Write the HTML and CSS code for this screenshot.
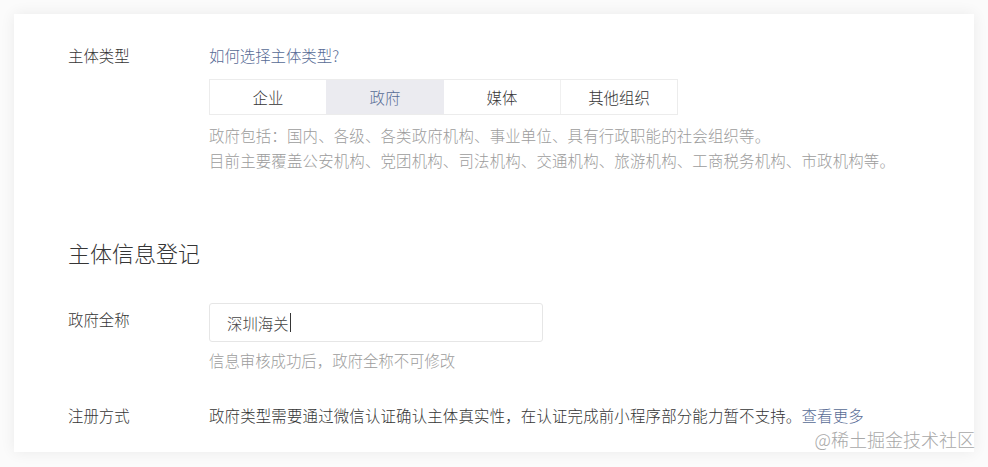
FILE: index.html
```html
<!DOCTYPE html>
<html lang="zh-CN">
<head>
<meta charset="utf-8">
<link rel="stylesheet" href="styles.css">
</head>
<body>
<div class="card">
  <div class="row row-type">
    <div class="label">主体类型</div>
    <div class="field">
      <a class="link">如何选择主体类型?</a>
      <div class="segmented">
        <div class="seg">企业</div>
        <div class="seg active">政府</div>
        <div class="seg">媒体</div>
        <div class="seg">其他组织</div>
      </div>
      <div class="help">政府包括：国内、各级、各类政府机构、事业单位、具有行政职能的社会组织等。<br>目前主要覆盖公安机构、党团机构、司法机构、交通机构、旅游机构、工商税务机构、市政机构等。</div>
    </div>
  </div>
  <h2 class="section-title">主体信息登记</h2>
  <div class="row row-name">
    <div class="label label-input">政府全称</div>
    <div class="field">
      <div class="input"><span class="value">深圳海关</span><span class="caret"></span></div>
      <div class="hint">信息审核成功后，政府全称不可修改</div>
    </div>
  </div>
  <div class="row row-reg">
    <div class="label">注册方式</div>
    <div class="field text">政府类型需要通过微信认证确认主体真实性，在认证完成前小程序部分能力暂不支持。<a class="link">查看更多</a></div>
  </div>
  <div class="watermark">@稀土掘金技术社区</div>
</div>
</body>
</html>
```
FILE: styles.css
```css
html, body {
  margin: 0;
  padding: 0;
}
body {
  background: #fbfbfb;
  font-family: "Noto Sans CJK SC", "Noto Sans", sans-serif;
  font-size: 15.4px;
  font-weight: 300;
  color: #353535;
  padding: 14px;
  width: 960px;
}
.card {
  position: relative;
  background: #fff;
  box-shadow: 0 0 14px rgba(0, 0, 0, 0.07);
  height: 438px;
  box-sizing: border-box;
  padding: 29px 54px 0;
}
.row {
  display: flex;
}
.label {
  width: 141px;
  flex: none;
  line-height: 24px;
}
.field {
  display: flex;
  flex-direction: column;
  align-items: flex-start;
}
.link {
  color: #576b95;
  line-height: 24px;
  cursor: pointer;
}
.segmented {
  display: flex;
  margin-top: 12px;
  border: 1px solid #ececec;
}
.seg {
  width: 116px;
  height: 34px;
  line-height: 34px;
  text-align: center;
  border-left: 1px solid #f0f0f0;
  color: #353535;
}
.seg:first-child {
  border-left: none;
}
.seg.active {
  background: #ebebf0;
  color: #576b95;
  border-left-color: #ebebf0;
}
.seg.active + .seg {
  border-left-color: #ebebf0;
}
.help {
  margin-top: 8px;
  line-height: 25px;
  color: #9c9c9c;
  letter-spacing: 0.2px;
}
.section-title {
  margin: 64px 0 0;
  font-size: 22px;
  font-weight: 300;
  line-height: 30px;
  color: #353535;
}
.row-name {
  margin-top: 36px;
}
.label-input {
  padding-top: 4px;
}
.input {
  box-sizing: border-box;
  width: 334px;
  height: 39px;
  border: 1px solid #e6e6e6;
  border-radius: 3px;
  display: flex;
  align-items: center;
  padding-left: 17px;
  color: #454545;
}
.caret {
  display: inline-block;
  width: 1px;
  height: 19px;
  background: #353535;
  margin-left: 1px;
}
.hint {
  margin-top: 6px;
  line-height: 24px;
  color: #9c9c9c;
}
.row-reg {
  margin-top: 31px;
}
.text {
  display: block;
  line-height: 24px;
  letter-spacing: 0.2px;
}
.watermark {
  position: absolute;
  right: -1px;
  bottom: 1px;
  font-size: 18px;
  line-height: 24px;
  color: #a8a8a8;
}
```
